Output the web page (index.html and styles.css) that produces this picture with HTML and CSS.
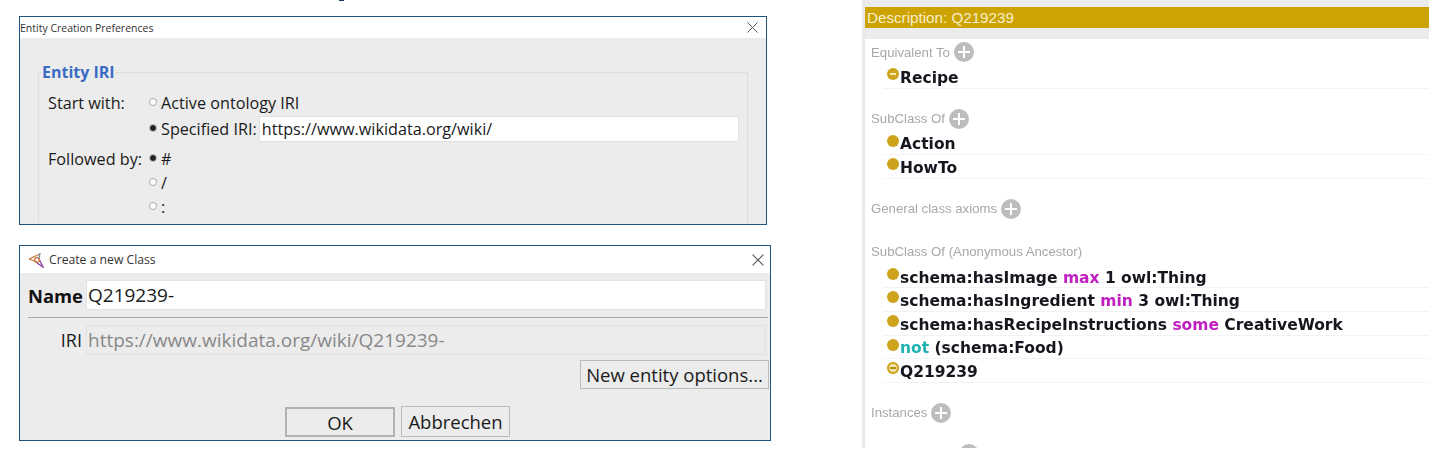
FILE: index.html
```html
<!DOCTYPE html>
<html lang="en">
<head>
    <meta charset="UTF-8">
    <meta name="viewport" content="width=device-width, initial-scale=1.0">
    <title>Entity creation and class description</title>
    <link rel="stylesheet" href="styles.css">
</head>
<body>
    <div class="dialogs">
        <div class="cut-mark"></div>

        <div class="dialog prefs">
            <div class="titlebar prefs-bar">
                <span class="title prefs-title">Entity Creation Preferences</span>
                <svg class="close" viewBox="0 0 11 11"><path d="M0.5 0.5L10.5 10.5M10.5 0.5L0.5 10.5"/></svg>
            </div>
            <fieldset class="iri-group">
                <legend>Entity IRI</legend>
                <div class="option-row start">
                    <span class="option-label">Start with:</span>
                    <span class="radio"></span>
                    <span>Active ontology IRI</span>
                </div>
                <div class="option-row">
                    <span class="option-label"></span>
                    <span class="radio checked"></span>
                    <span>Specified IRI:</span>
                    <div class="field iri-field">https://www.wikidata.org/wiki/</div>
                </div>
                <div class="option-row followed">
                    <span class="option-label">Followed by:</span>
                    <span class="radio checked"></span>
                    <span>#</span>
                </div>
                <div class="option-row">
                    <span class="option-label"></span>
                    <span class="radio"></span>
                    <span>/</span>
                </div>
                <div class="option-row">
                    <span class="option-label"></span>
                    <span class="radio"></span>
                    <span>:</span>
                </div>
            </fieldset>
        </div>

        <div class="dialog new-class">
            <div class="titlebar class-bar">
                <svg class="app-icon" viewBox="0 0 16 16">
                    <path class="icon-orange" d="M1 7L12 2M1 7L9 10"/>
                    <path class="icon-blue" d="M12 1L11 7"/>
                    <path class="icon-purple" d="M11 7L15 15L9 11"/>
                    <circle class="icon-orange" cx="9" cy="8" r="2.4"/>
                </svg>
                <span class="title">Create a new Class</span>
                <svg class="close" viewBox="0 0 11 11"><path d="M0.5 0.5L10.5 10.5M10.5 0.5L0.5 10.5"/></svg>
            </div>
            <div class="form-row">
                <span class="form-label name-label">Name</span>
                <div class="field name-field">Q219239-</div>
            </div>
            <div class="divider"></div>
            <div class="form-row">
                <span class="form-label">IRI</span>
                <div class="field disabled-field">https://www.wikidata.org/wiki/Q219239-</div>
            </div>
            <div class="options-row">
                <button class="btn options-btn">New entity options...</button>
            </div>
            <div class="actions">
                <button class="btn ok-btn">OK</button>
                <button class="btn cancel-btn">Abbrechen</button>
            </div>
        </div>
    </div>

    <div class="description">
        <div class="desc-head">Description: Q219239</div>
        <div class="desc-body">
            <section class="frame">
                <div class="frame-label">Equivalent To <span class="add"></span></div>
                <div class="axiom"><span class="dot minus"></span>Recipe</div>
            </section>
            <section class="frame">
                <div class="frame-label">SubClass Of <span class="add"></span></div>
                <div class="axiom"><span class="dot"></span>Action</div>
                <div class="axiom"><span class="dot"></span>HowTo</div>
            </section>
            <section class="frame">
                <div class="frame-label">General class axioms <span class="add"></span></div>
            </section>
            <section class="frame">
                <div class="frame-label">SubClass Of (Anonymous Ancestor)</div>
                <div class="axiom"><span class="dot"></span>schema:hasImage <span class="kw">max</span> 1 owl:Thing</div>
                <div class="axiom"><span class="dot"></span>schema:hasIngredient <span class="kw">min</span> 3 owl:Thing</div>
                <div class="axiom"><span class="dot"></span>schema:hasRecipeInstructions <span class="kw">some</span> CreativeWork</div>
                <div class="axiom"><span class="dot"></span><span class="kw-not">not</span> (schema:Food)</div>
                <div class="axiom"><span class="dot minus pale"></span>Q219239</div>
            </section>
            <section class="frame">
                <div class="frame-label">Instances <span class="add"></span></div>
            </section>
            <div class="next-add"><span class="add"></span></div>
        </div>
    </div>
</body>
</html>
```

FILE: styles.css
```css
html, body {
    margin: 0;
    padding: 0;
    height: 100%;
    background: white;
}
body {
    display: flex;
    width: 1442px;
    height: 454px;
    overflow: hidden;
    font-family: 'Open Sans', 'Liberation Sans', sans-serif;
    color: #1a1a1a;
}

/* left column */
.dialogs {
    width: 862px;
    padding-left: 19px;
    box-sizing: border-box;
}
.cut-mark {
    width: 5px;
    height: 1px;
    margin: 0 0 15px 320px;
    background: #1f3a60;
}
.dialog {
    border: 1px solid #1f5680;
    background: #ececec;
    box-sizing: border-box;
    overflow: hidden;
}
.prefs {
    width: 748px;
    height: 209px;
    margin-bottom: 20px;
}
.new-class {
    width: 752px;
    height: 196px;
}
.titlebar {
    display: flex;
    align-items: center;
    background: white;
}
.prefs-bar {
    height: 21px;
    padding: 0 8px 0 0;
}
.class-bar {
    height: 27px;
    padding: 0 6px 0 8px;
}
.title {
    flex: 1;
    font-size: 12.2px;
    color: #333;
}
.prefs-title {
    font-size: 10.5px;
}
.close {
    width: 11px;
    height: 11px;
    fill: none;
    stroke: #555;
    stroke-width: 1;
}
.class-bar .close {
    width: 12px;
    height: 12px;
}
.app-icon {
    width: 16px;
    height: 16px;
    margin-right: 5px;
    fill: none;
    stroke-width: 1.3;
}
.icon-orange { stroke: #c9743a; }
.icon-blue { stroke: #6f8fc0; }
.icon-purple { stroke: #8a3fa8; }

/* preferences group */
.iri-group {
    margin: 23px 18px 0 18px;
    padding: 8px 0 0 9px;
    border: 1px solid #dedede;
    border-bottom: none;
    height: 162px;
    box-sizing: border-box;
}
.iri-group legend {
    margin-left: -6px;
    padding: 0;
    font-size: 16px;
    font-weight: bold;
    color: #3a6cc4;
}
.option-row {
    display: flex;
    align-items: center;
    height: 24px;
    font-size: 16.2px;
}
.start {
    margin-bottom: 2px;
}
.followed {
    margin-top: 6px;
}
.option-label {
    width: 101px;
    flex-shrink: 0;
}
.radio {
    width: 6px;
    height: 6px;
    margin: 0 4px 3px 0;
    border: 1px solid #aaa;
    border-radius: 50%;
    background: white;
    flex-shrink: 0;
}
.radio.checked {
    background: #222;
    border-color: #ccc;
}
.field {
    box-sizing: border-box;
    background: white;
    border: 1px solid #e2e2e2;
}
.iri-field {
    width: 480px;
    height: 26px;
    margin-left: 2px;
    padding-left: 2px;
    line-height: 24px;
}

/* new class form */
.form-row {
    display: flex;
    align-items: center;
    margin-top: 7px;
    padding-left: 8px;
}
.form-label {
    width: 54px;
    margin-right: 4px;
    font-size: 18px;
    text-align: right;
}
.name-label {
    font-size: 18.4px;
    font-weight: bold;
    color: #111;
}
.name-field, .disabled-field {
    width: 680px;
    height: 30px;
    padding-left: 1px;
    font-size: 19px;
    line-height: 28px;
}
.disabled-field {
    background: #ececec;
    color: #888;
}
.divider {
    height: 1px;
    margin: 7px 2px 0 8px;
    background: #aaa;
}
.options-row {
    display: flex;
    justify-content: flex-end;
    margin-top: 5px;
    padding-right: 1px;
}
.btn {
    box-sizing: border-box;
    padding: 0;
    font-family: inherit;
    font-size: 18.5px;
    color: #1a1a1a;
    background: #ececec;
    border: 1px solid #bbb;
}
.options-btn {
    width: 189px;
    height: 29px;
}
.actions {
    display: flex;
    align-items: flex-end;
    margin-top: 17px;
    padding-left: 265px;
    gap: 6px;
}
.ok-btn {
    width: 110px;
    height: 30px;
    border: 2px solid #b2b2b2;
}
.cancel-btn {
    width: 109px;
    height: 31px;
}

/* right panel */
.description {
    width: 567px;
    height: 448px;
    border-left: 3px solid #e8e8e8;
    box-sizing: border-box;
    background: #ececec;
    padding-top: 7px;
}
.desc-head {
    height: 21px;
    padding-left: 2px;
    background: #cca300;
    color: #f6eecd;
    font-family: 'Liberation Sans', Arial, sans-serif;
    font-size: 15.2px;
    line-height: 22px;
}
.desc-body {
    margin-top: 11px;
    height: 409px;
    background: white;
    overflow: hidden;
    filter: blur(0.4px);
}
.frame {
    padding-bottom: 17px;
}
.frame-label {
    display: flex;
    align-items: center;
    gap: 4px;
    height: 26px;
    padding-left: 6px;
    font-family: 'Liberation Sans', Arial, sans-serif;
    font-size: 13.2px;
    color: #a8a8a8;
}
.add {
    position: relative;
    width: 20px;
    height: 20px;
    border-radius: 50%;
    background: #bdbdbd;
}
.add::before, .add::after {
    content: "";
    position: absolute;
    background: white;
}
.add::before {
    left: 4px;
    top: 9px;
    width: 12px;
    height: 2px;
}
.add::after {
    left: 9px;
    top: 4px;
    width: 2px;
    height: 12px;
}
.next-add {
    display: flex;
    padding: 1px 0 0 94px;
}
.axiom {
    display: flex;
    align-items: center;
    white-space: pre-wrap;
    box-sizing: border-box;
    height: 23.6px;
    margin-left: 18px;
    padding: 3px 0 0 17px;
    position: relative;
    border-bottom: 1px solid #f3f3f3;
    font-family: 'DejaVu Sans', Verdana, sans-serif;
    font-size: 15.5px;
    font-weight: bold;
    color: #16161e;
}
.dot {
    position: absolute;
    left: 4px;
    top: 3px;
    width: 12px;
    height: 12px;
    border-radius: 50%;
    background: #cca31a;
}
.dot.minus::after {
    content: "";
    position: absolute;
    left: 3px;
    top: 5px;
    width: 6px;
    height: 2px;
    background: #f4e9b8;
}
.dot.pale {
    background: #f0e3a8;
    box-shadow: inset 0 0 0 2px #cca31a;
}
.dot.pale::after {
    background: #b58f10;
}
.kw { color: #c020c0; }
.kw-not { color: #20b2b2; }
```
